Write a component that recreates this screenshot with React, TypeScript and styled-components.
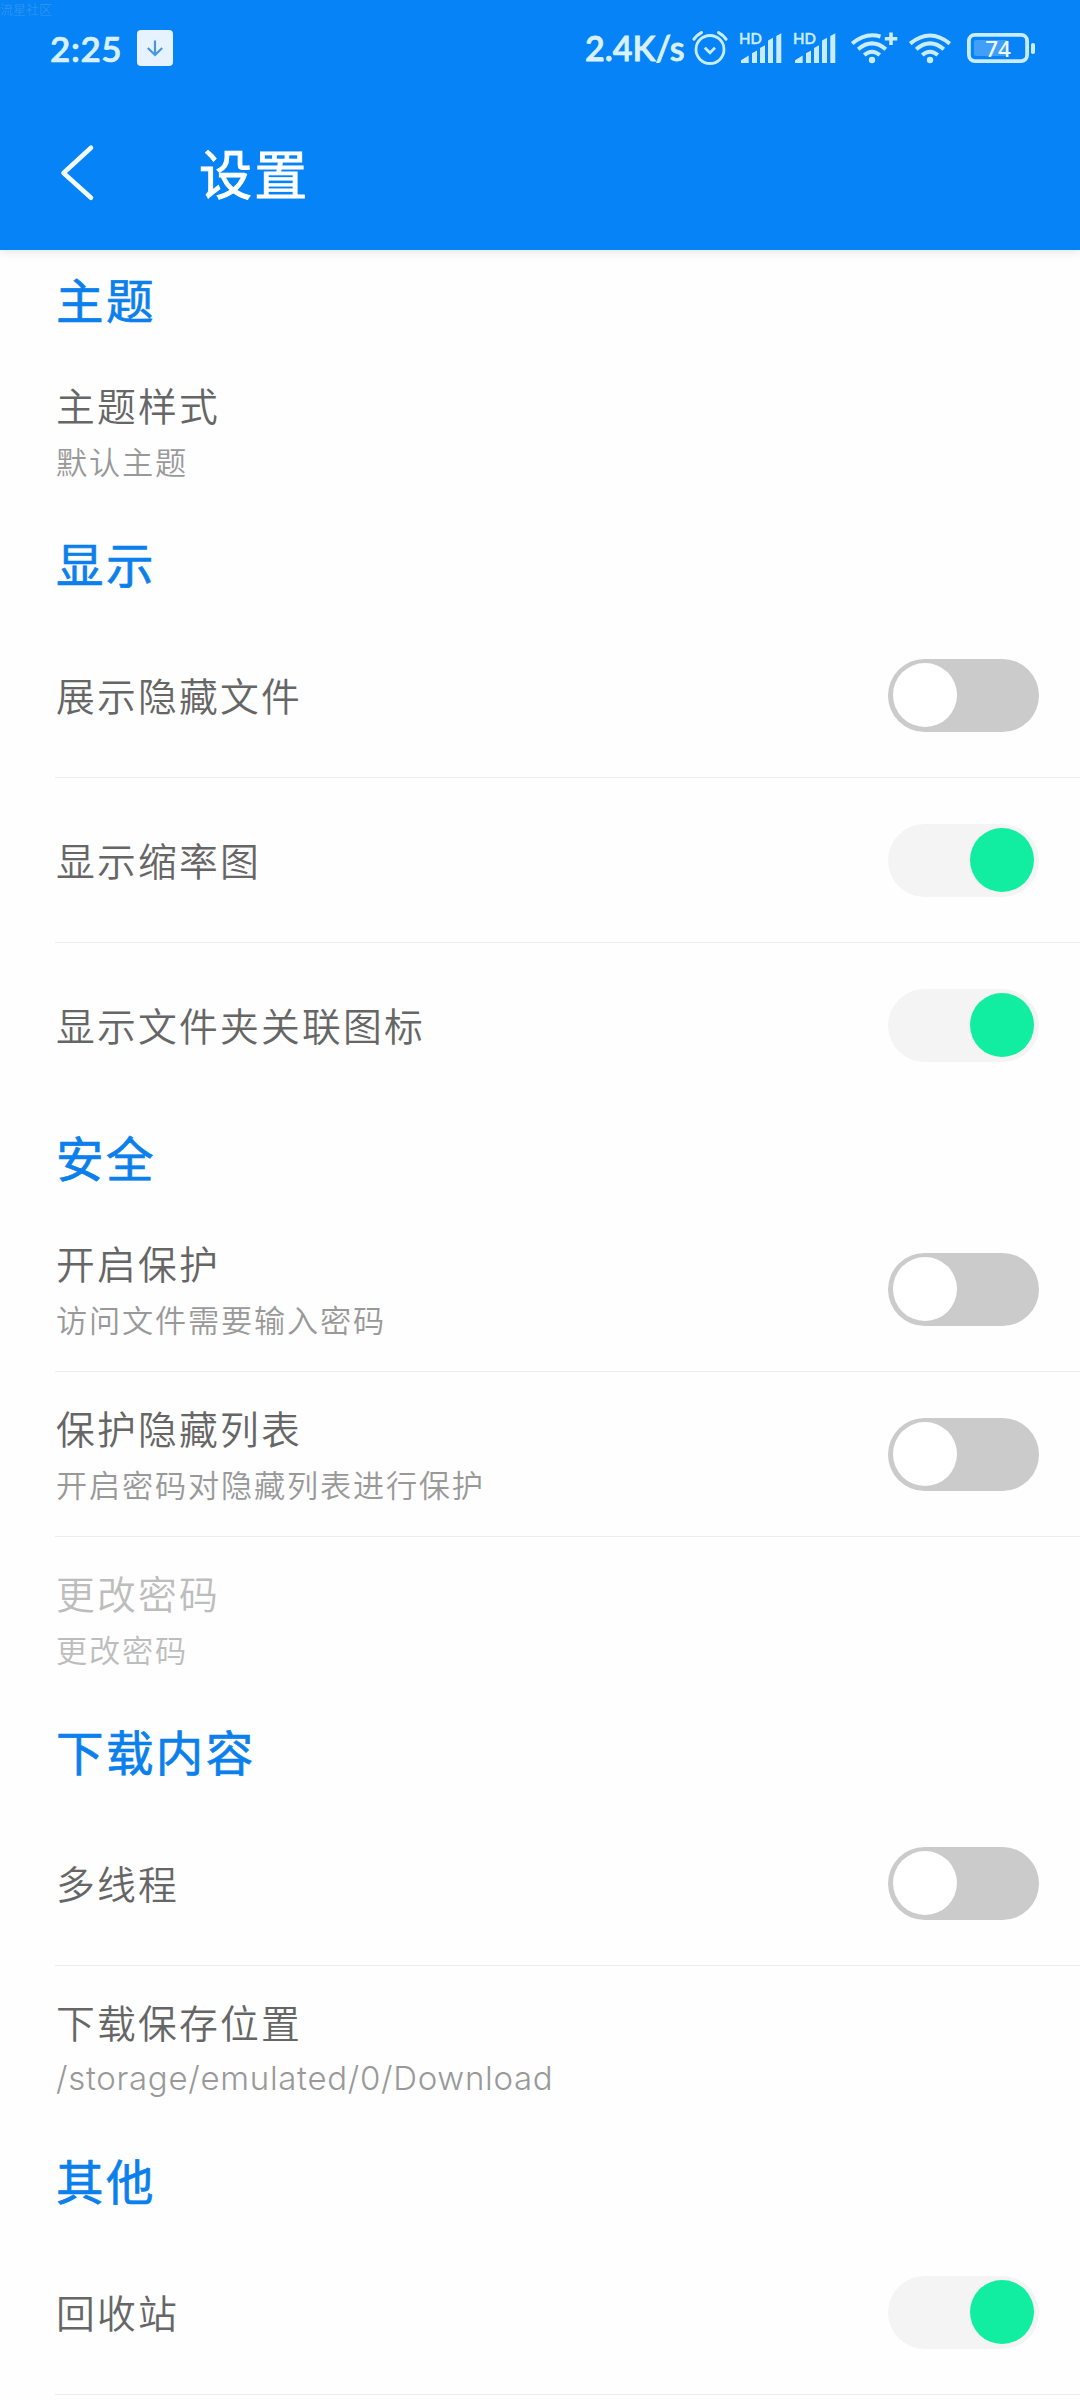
import React from "react";
import styled, { createGlobalStyle } from "styled-components";

const GlobalStyle = createGlobalStyle`
  * { box-sizing: border-box; }
  body {
    margin: 0;
    background: #fefefe;
    font-family: "Noto Sans CJK SC", sans-serif;
  }
`;

const Screen = styled.div`
  width: 1080px;
  height: 2400px;
  overflow: hidden;
  background: #fefefe;
`;

const TopArea = styled.header`
  position: relative;
  height: 250px;
  background: #0583f7;
  box-shadow: 0 2px 10px rgba(0, 0, 0, 0.1);
`;

const Watermark = styled.span`
  position: absolute;
  left: 0;
  top: 0;
  font-size: 13px;
  line-height: 17px;
  color: #3a98ee;
  font-weight: 300;
`;

const StatusBar = styled.div`
  display: flex;
  align-items: center;
  justify-content: space-between;
  height: 96px;
  padding: 0 45px 0 50px;
  color: #d9f1ff;
  font-family: Lato, "Noto Sans CJK SC", sans-serif;
`;

const StatusGroup = styled.div`
  display: flex;
  align-items: center;
`;

const Clock = styled.span`
  width: 87px;
  font-size: 35px;
  font-weight: 600;
  -webkit-text-stroke: 0.7px #d9f1ff;
  line-height: 40px;
  letter-spacing: 0.6px;
  white-space: nowrap;
`;

const Speed = styled.span`
  font-size: 34px;
  font-weight: 600;
  -webkit-text-stroke: 0.8px #d9f1ff;
  line-height: 40px;
  width: 107px;
  white-space: nowrap;
`;

const Glyph = styled.svg<{ $gap?: number }>`
  display: block;
  flex: none;
  margin-left: ${(p) => p.$gap ?? 0}px;
  overflow: visible;
`;

const TitleBar = styled.div`
  display: flex;
  align-items: center;
  height: 154px;
  padding-left: 59px;
`;

const PageTitle = styled.h1`
  margin: 0 0 0 105px;
  padding-bottom: 2px;
  font-size: 53px;
  line-height: 60px;
  font-weight: 400;
  -webkit-text-stroke: 0.9px #fff;
  letter-spacing: 2.3px;
  color: #fff;
`;

const SectionTitle = styled.h2`
  display: flex;
  align-items: center;
  height: 99px;
  margin: 0;
  padding: 0 0 3px 56px;
  font-size: 47.5px;
  font-weight: 400;
  -webkit-text-stroke: 0.7px #0b80ec;
  letter-spacing: 2.4px;
  color: #0b80ec;
`;

const Row = styled.div<{ $disabled?: boolean }>`
  display: flex;
  align-items: center;
  justify-content: space-between;
  height: 165px;
  margin-left: 55px;
  padding: 0 41px 0 1px;
  border-bottom: 1px solid #ededed;
  color: ${(p) => (p.$disabled ? "#bdbdbd" : "#666")};

  &:last-child {
    border-bottom-color: transparent;
  }
`;

const Labels = styled.div`
  display: flex;
  flex-direction: column;
  padding-bottom: 2px;
`;

const Label = styled.span`
  font-size: 38.8px;
  line-height: 60px;
  letter-spacing: 2.2px;
  font-weight: 350;
`;

const Hint = styled.span<{ $disabled?: boolean; $latin?: boolean }>`
  margin-top: 2px;
  font-size: ${(p) => (p.$latin ? 33 : 31.2)}px;
  line-height: 50px;
  letter-spacing: ${(p) => (p.$latin ? 0.7 : 1.8)}px;
  font-weight: ${(p) => (p.$latin ? 300 : 350)};
  font-family: ${(p) => (p.$latin ? "Inter, " : "")}"Noto Sans CJK SC", sans-serif;
  color: ${(p) => (p.$disabled ? "#bdbdbd" : "#999")};
`;

const Track = styled.div<{ $on: boolean }>`
  display: flex;
  align-items: center;
  justify-content: ${(p) => (p.$on ? "flex-end" : "flex-start")};
  width: 151px;
  height: 73px;
  padding: 0 5px;
  border-radius: 37px;
  background: ${(p) => (p.$on ? "#f4f4f4" : "#cbcbcb")};
`;

const Knob = styled.div<{ $on: boolean }>`
  width: 64px;
  height: 64px;
  border-radius: 50%;
  background: ${(p) => (p.$on ? "#11eea2" : "#fff")};
`;

interface Item {
  label: string;
  hint?: string;
  latin?: boolean;
  on?: boolean;
  disabled?: boolean;
}

const sections: { title: string; items: Item[] }[] = [
  { title: "主题", items: [{ label: "主题样式", hint: "默认主题" }] },
  {
    title: "显示",
    items: [
      { label: "展示隐藏文件", on: false },
      { label: "显示缩率图", on: true },
      { label: "显示文件夹关联图标", on: true },
    ],
  },
  {
    title: "安全",
    items: [
      { label: "开启保护", hint: "访问文件需要输入密码", on: false },
      { label: "保护隐藏列表", hint: "开启密码对隐藏列表进行保护", on: false },
      { label: "更改密码", hint: "更改密码", disabled: true },
    ],
  },
  {
    title: "下载内容",
    items: [
      { label: "多线程", on: false },
      { label: "下载保存位置", hint: "/storage/emulated/0/Download", latin: true },
    ],
  },
  { title: "其他", items: [{ label: "回收站", on: true }, { label: "" }] },
];

const INK = "#c9ecff";

const DownloadBadge = () => (
  <Glyph width="36" height="36" viewBox="0 0 36 36" fill="none">
    <rect width="36" height="36" rx="4" fill="#e6f2fd" />
    <path d="M18 10.5v14.5M10.8 18l7.2 7 7.2-7" stroke="#4796e2" strokeWidth="2.2" />
  </Glyph>
);

const AlarmIcon = () => (
  <Glyph width="36" height="36" viewBox="0 0 36 36" fill="none" stroke={INK} strokeLinecap="round">
    <circle cx="18" cy="19.5" r="14" strokeWidth="2.8" />
    <path d="M12.8 17.8l5.2 4.9 5-4.9" strokeWidth="2.8" strokeLinecap="butt" />
    <path d="M2 9.2Q4.8 5 9.4 2.6M34 9.2Q31.2 5 26.6 2.6" strokeWidth="3.2" />
  </Glyph>
);

const HdText = styled.text`
  font: 600 15px Lato, sans-serif;
  stroke: #c9ecff;
  stroke-width: 0.4px;
`;

const SignalIcon = ({ gap }: { gap: number }) => (
  <Glyph $gap={gap} width="42" height="32" viewBox="0 0 42 32" fill={INK}>
    <HdText x="-1" y="11.500">HD</HdText>
    <path d="M1 31v-2.8L8.700 23.600V31z" />
    <path d="M12 31V21.200l5-2.700V31z" />
    <path d="M20 31V16l5-2.800V31z" />
    <path d="M28 31V8.500l5-2.800V31z" />
    <path d="M36.300 31V4l5-2.800V31z" />
  </Glyph>
);

const WifiIcon = ({ gap, plus }: { gap: number; plus?: boolean }) => (
  <Glyph
    $gap={gap}
    width={plus ? 47 : 42}
    height="32"
    viewBox={plus ? "0 0 47 32" : "0 0 42 32"}
    fill="none"
    stroke={INK}
    strokeWidth="4"
  >
    <path d={plus ? "M1.200 11.600Q14.500 .2 29.500 4.500" : "M1.200 11.600Q21 -4.500 40.800 11.600"} />
    <path d="M7.200 17.300Q21 5.500 34.800 17.300" />
    <path d="M13.200 23Q21 16.500 28.800 23" />
    <circle cx="21" cy="28" r="3.200" fill={INK} stroke="none" />
    {plus && <path d="M40 .5v12.500M33.800 6.700h12.500" strokeWidth="3.600" />}
  </Glyph>
);

const BatteryText = styled.text`
  font: 500 22.5px "Noto Sans", sans-serif;
`;

const BatteryIcon = () => (
  <Glyph $gap={16} width="68" height="30" viewBox="0 0 68 30">
    <rect x="1.900" y="1.900" width="58.200" height="26.200" rx="6" fill="none" stroke={INK} strokeWidth="3.800" />
    <rect x="7" y="7" width="34" height="16" rx="2" fill="#429ff8" />
    <rect x="64" y="10" width="4" height="11" rx="1.800" fill={INK} />
    <BatteryText x="31" y="23.500" textAnchor="middle" fill="#effaff">74</BatteryText>
  </Glyph>
);

const BackIcon = () => (
  <Glyph width="35" height="56" viewBox="0 0 35 56" fill="none">
    <path d="M32 2.800L4.500 28 32 52.800" stroke="#f2fbff" strokeWidth="4.600" strokeLinecap="round" strokeLinejoin="round" />
  </Glyph>
);

const Toggle = ({ on }: { on: boolean }) => (
  <Track $on={on} role="switch" aria-checked={on}>
    <Knob $on={on} />
  </Track>
);

const SettingRow = ({ item }: { item: Item }) => (
  <Row $disabled={item.disabled}>
    <Labels>
      <Label>{item.label}</Label>
      {item.hint && (
        <Hint $disabled={item.disabled} $latin={item.latin}>
          {item.hint}
        </Hint>
      )}
    </Labels>
    {item.on !== undefined && <Toggle on={item.on} />}
  </Row>
);

export default function App() {
  return (
    <Screen>
      <GlobalStyle />
      <TopArea>
        <Watermark>流星社区</Watermark>
        <StatusBar>
          <StatusGroup>
            <Clock>2:25</Clock>
            <DownloadBadge />
          </StatusGroup>
          <StatusGroup>
            <Speed>2.4K/s</Speed>
            <AlarmIcon />
            <SignalIcon gap={12} />
            <SignalIcon gap={12} />
            <WifiIcon gap={15} plus />
            <WifiIcon gap={11} />
            <BatteryIcon />
          </StatusGroup>
        </StatusBar>
        <TitleBar>
          <BackIcon />
          <PageTitle>设置</PageTitle>
        </TitleBar>
      </TopArea>
      <main>
        {sections.map((section) => (
          <section key={section.title}>
            <SectionTitle>{section.title}</SectionTitle>
            {section.items.map((item) => (
              <SettingRow key={item.label} item={item} />
            ))}
          </section>
        ))}
      </main>
    </Screen>
  );
}
